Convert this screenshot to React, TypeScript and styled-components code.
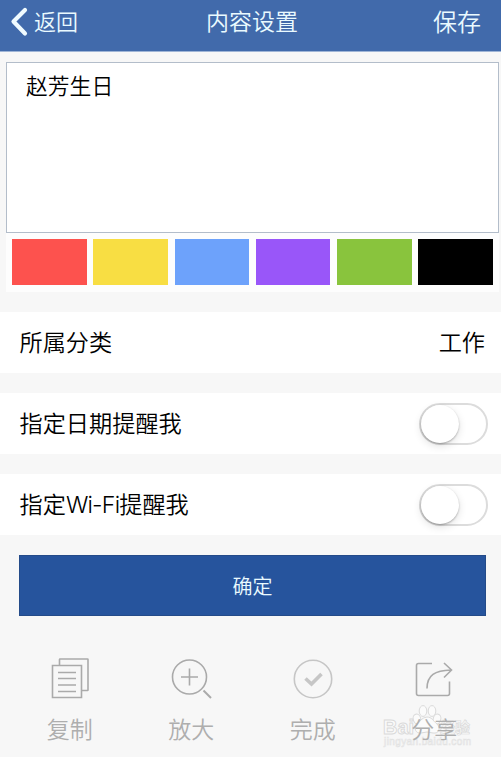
import React from 'react';
import styled, { createGlobalStyle } from 'styled-components';

const GlobalStyle = createGlobalStyle`
  * { box-sizing: border-box; }
  body {
    margin: 0;
    background: #f7f7f7;
    color: #000;
    font-family: Inter, "Noto Sans CJK SC DemiLight", "Noto Sans CJK SC", sans-serif;
    font-weight: 350;
  }
  button, textarea { font: inherit; color: inherit; border: 0; padding: 0; margin: 0; background: none; }
`;

const Page = styled.main`
  width: 501px;
  height: 757px;
  overflow: hidden;
  display: flex;
  flex-direction: column;
`;

const Header = styled.header`
  flex: none;
  height: 52px;
  padding: 0 20px 8px 10px;
  display: grid;
  grid-template-columns: 196px auto 1fr;
  align-items: center;
  background: #416aab;
  border-bottom: 1px solid #9fb5d6;
  color: #eafaff;
  font-size: 23px;
  line-height: 30px;
`;

const BackButton = styled.button`
  display: flex;
  align-items: center;
  gap: 6px;
  font-size: 22px;
  svg { display: block; }
`;

const Title = styled.h1`
  margin: 1px 0 0;
  font: inherit;
`;

const SaveButton = styled.button`
  justify-self: end;
  margin-top: 2px;
  font-size: 24px;
`;

const Editor = styled.section`
  flex: none;
  height: 240px;
  padding: 10px 2px 0 6px;
`;

const Note = styled.textarea`
  && {
    display: block;
    width: 493px;
    height: 171px;
    padding: 6px 19px;
    border: 1px solid #b3bdca;
    background: #fff;
    resize: none;
    outline: none;
    font-size: 21.8px;
    line-height: 34px;
  }
`;

const Palette = styled.div`
  width: 493px;
  height: 59px;
  padding: 6px 6px 7px;
  display: grid;
  grid-template-columns: repeat(6, 1fr);
  gap: 6.6px;
  background: #fdfdfd;
`;

const Swatch = styled.button<{ $color: string }>`
  && { background: ${({ $color }) => $color}; }
`;

const Rows = styled.section`
  display: flex;
  flex-direction: column;
  gap: 20px;
  margin-top: 20px;
`;

const Row = styled.div`
  height: 61px;
  padding: 0 13px 0 19.5px;
  display: flex;
  align-items: center;
  justify-content: space-between;
  background: #fff;
  font-size: 23.2px;
  line-height: 34px;
`;

const RowValue = styled.span`
  margin-right: 3px;
`;

const Latin = styled.span`
  letter-spacing: -0.8px;
`;

const Toggle = styled.button`
  && {
    width: 69px;
    height: 42px;
    margin-top: 1px;
    padding: 0;
    border: 2px solid #dcdcdc;
    border-radius: 21px;
    background: #fff;
    display: flex;
    align-items: center;
  }
`;

const Knob = styled.span`
  width: 38px;
  height: 38px;
  border-radius: 50%;
  background: #fff;
  box-shadow: 0 1px 2px rgba(0, 0, 0, 0.28), 0 3px 8px rgba(0, 0, 0, 0.12);
`;

const Confirm = styled.button`
  && {
    flex: none;
    width: 467px;
    height: 61px;
    margin: 20px 0 0 19px;
    background: #26549d;
    border: 1px solid #244b89;
    color: #eafaff;
    font-size: 20px;
  }
`;

const Actions = styled.nav`
  flex: none;
  display: grid;
  grid-template-columns: repeat(4, 121.5px);
  margin: 40px 0 0 9px;
`;

const Action = styled.button`
  && {
    display: flex;
    flex-direction: column;
    align-items: center;
    color: #aeaeae;
    font-size: 23px;
    line-height: 34px;
  }
  svg { display: block; margin-bottom: 11px; }
`;

const ShareSlot = styled.div`
  position: relative;
  display: grid;
  ${Action} { z-index: 1; }
`;

const Watermark = styled.div`
  position: absolute;
  left: 8px;
  top: 46px;
  width: 94px;
  height: 48px;
  pointer-events: none;
  svg { display: block; }
`;

const icon = { width: 46, height: 46, viewBox: '0 0 46 46', fill: 'none', stroke: '#aaa', strokeWidth: 1.6 };

const CopyIcon = () => (
  <svg {...icon}>
    <path d="M12.500 9.500V3.500Q12.500 3 13 3H40.500Q41 3 41 3.500V34Q41 34.500 40.500 34.500H34.500" />
    <path d="M5.500 9.500H34.500V41.500H5.500ZM11 16.500H29M11 22.500H29M11 29H29M11 35.500H29" />
  </svg>
);

const EnlargeIcon = () => (
  <svg {...icon}>
    <circle cx="21.500" cy="21" r="17" />
    <path d="M13 21H30M21.500 12.500V29.500" />
    <path d="M35.500 34.500L43 42" strokeWidth="2" />
  </svg>
);

const DoneIcon = () => (
  <svg {...icon} stroke="#c6c6c6">
    <circle cx="23" cy="23" r="18.700" />
    <path d="M15.500 22.500L21.500 28L31.500 18" strokeWidth="3.600" />
  </svg>
);

const ShareIcon = () => (
  <svg {...icon}>
    <path d="M21 7.500H7.500Q5.500 7.500 5.500 9.500V37.500Q5.500 39.500 7.500 39.500H36.500Q38.500 39.500 38.500 37.500V25.500" />
    <path d="M16 32.500C16 19 24 14.500 40 14M33 7L40.500 14L33 21.500" />
  </svg>
);

const WatermarkArt = () => (
  <svg width="94" height="48" viewBox="0 0 94 48" fill="#fbfbfb" stroke="#dadada" strokeWidth="1">
    <g>
      <ellipse cx="35" cy="17" rx="3.800" ry="5" transform="rotate(-15 35 17)" />
      <ellipse cx="41" cy="9" rx="3.800" ry="5.400" />
      <ellipse cx="50" cy="9" rx="3.800" ry="5.400" />
      <ellipse cx="55" cy="17" rx="3.800" ry="5" transform="rotate(15 55 17)" />
      <path d="M45 15C39 16 38 20 35 22C31 26 34 32 39 31Q45 29 51 31C57 32 59 26 55 22C51 19 50 15 45 15Z" />
    </g>
    <g fontFamily="Liberation Sans, sans-serif" fontWeight="700">
      <text x="1" y="32" fontSize="21" textLength="31" lengthAdjust="spacingAndGlyphs">Bai</text>
      <text x="58" y="31" fontSize="15" fontFamily="Noto Sans CJK SC, sans-serif" strokeWidth=".7" textLength="30">经验</text>
      <text x="2" y="43" fontSize="10" fontWeight="400" stroke="#e2e2e2" strokeWidth=".6" textLength="87">jingyan.baidu.com</text>
    </g>
  </svg>
);

const swatches = ['#fd524e', '#f8de43', '#6da2fb', '#9956f9', '#89c43d', '#000'];

export default function App() {
  return (
    <>
      <GlobalStyle />
      <Page>
        <Header>
          <BackButton>
            <svg width="18" height="30" viewBox="0 0 18 30" fill="none" stroke="#f0fbff" strokeWidth="4.200" strokeLinecap="round" strokeLinejoin="round">
              <path d="M15 3L3.500 14.500L15 26.500" />
            </svg>
            返回
          </BackButton>
          <Title>内容设置</Title>
          <SaveButton>保存</SaveButton>
        </Header>
        <Editor>
          <Note defaultValue="赵芳生日" spellCheck={false} />
          <Palette>
            {swatches.map((color) => <Swatch key={color} $color={color} />)}
          </Palette>
        </Editor>
        <Rows>
          <Row>所属分类<RowValue>工作</RowValue></Row>
          <Row>指定日期提醒我<Toggle><Knob /></Toggle></Row>
          <Row><span>指定<Latin>Wi-Fi</Latin>提醒我</span><Toggle><Knob /></Toggle></Row>
        </Rows>
        <Confirm>确定</Confirm>
        <Actions>
          <Action><CopyIcon />复制</Action>
          <Action><EnlargeIcon />放大</Action>
          <Action><DoneIcon />完成</Action>
          <ShareSlot>
            <Action><ShareIcon />分享</Action>
            <Watermark><WatermarkArt /></Watermark>
          </ShareSlot>
        </Actions>
      </Page>
    </>
  );
}
